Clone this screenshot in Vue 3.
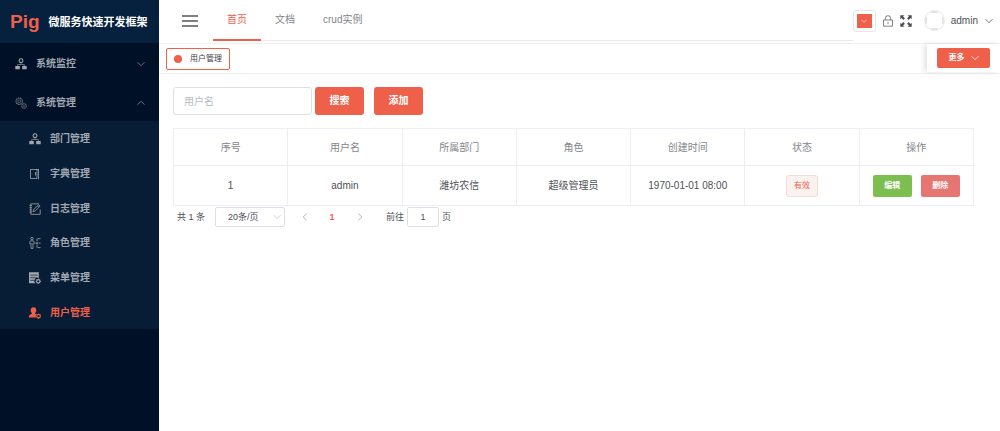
<script setup>
import { ref } from 'vue'

const topNav = ['首页', '文档', 'crud实例']
const groups = [
  { label: '系统监控', icon: 'org', open: false },
  { label: '系统管理', icon: 'gears', open: true }
]
const subItems = [
  { label: '部门管理', icon: 'org' },
  { label: '字典管理', icon: 'book' },
  { label: '日志管理', icon: 'log' },
  { label: '角色管理', icon: 'role' },
  { label: '菜单管理', icon: 'menu' },
  { label: '用户管理', icon: 'user', active: true }
]
const columns = ['序号', '用户名', '所属部门', '角色', '创建时间', '状态', '操作']
const rows = [
  { id: 1, name: 'admin', dept: '潍坊农信', role: '超级管理员', time: '1970-01-01 08:00', status: '有效' }
]
const keyword = ref('')
const pageSize = ref('20')
const jump = ref('1')
</script>

<template>
  <div class="app">
    <svg class="defs" aria-hidden="true">
      <symbol id="org" viewBox="0 0 12 12">
        <circle cx="6" cy="2.7" r="1.900" fill="none" stroke="currentColor" stroke-width="1.100" />
        <path d="M6 4.800v1.700M2.700 8V6.500h6.600V8" fill="none" stroke="currentColor" stroke-width=".6" />
        <path d="M.3 8h4.500v3.200H.3zM7.200 8h4.500v3.200H7.200z" fill="currentColor" />
      </symbol>
      <symbol id="gears" viewBox="0 0 12 12">
        <g fill="none" stroke="currentColor">
          <circle cx="4.200" cy="4.200" r="3.200" stroke-width="1.200" stroke-dasharray="1.700 .5" />
          <circle cx="4.200" cy="4.200" r="1.400" stroke-width=".8" />
          <circle cx="9" cy="8.900" r="2.300" stroke-width="1.100" stroke-dasharray="1.300 .5" />
          <circle cx="9" cy="8.900" r=".8" stroke-width=".6" />
        </g>
      </symbol>
      <symbol id="book" viewBox="0 0 12 12">
        <path d="M1.500 1.500h6.500v9H1.500zM9.500 1v10.300M8 1.500h1.500M6.500 4v3.500" fill="none" stroke="currentColor" stroke-width=".8" />
      </symbol>
      <symbol id="log" viewBox="0 0 12 12">
        <path d="M10 .8H1.800v10.500h9.400V6.500" fill="none" stroke="currentColor" stroke-width=".8" />
        <path d="M4 8.800l.6-2.300L9.700 1.700l1.400 1.300-5 5zM8.400 2.900l1.400 1.300" fill="none" stroke="currentColor" stroke-width=".8" />
        <path d="M.4 2.500h2.500M.4 4.700h2.500M.4 6.900h2.500M.4 9.100h2.500" stroke="currentColor" stroke-width=".8" />
      </symbol>
      <symbol id="role" viewBox="0 0 12 12">
        <g fill="none" stroke="currentColor" stroke-width=".8">
          <circle cx="3" cy="1.600" r="1.200" />
          <path d="M.9 7.200V5c0-.8.4-1.200 1.100-1.200h2c.7 0 1.100.4 1.100 1.200v2.200M2 6v5.400M4 6v5.400M2 11.400h2" />
          <path d="M11.600 1.700H8v8.900h3.600M6.400 6.200h5.200" stroke-dasharray="2.800 .5" />
        </g>
      </symbol>
      <symbol id="menu" viewBox="0 0 12 12">
        <path d="M0 .3h9.800v6a3 3 0 0 0-3.400 4.900H0z" fill="currentColor" />
        <path d="M1.200 3.100h7.500M1.200 5.700h7.500M1.200 8.300h4.500" stroke="#071d36" stroke-width=".7" />
        <circle cx="9.300" cy="9.300" r="1.700" fill="none" stroke="currentColor" stroke-width="1.100" />
        <path d="M9.300 6.700v1M9.300 11v1M6.700 9.300h1M11 9.300h1M7.500 7.500l.7.7M10.400 10.400l.7.7M11.100 7.500l-.7.7M8.200 10.400l-.7.7" stroke="currentColor" stroke-width=".9" />
      </symbol>
      <symbol id="user" viewBox="0 0 12 12">
        <path d="M4.500.3c1.800 0 2.800 1.300 2.800 2.900 0 1.300-.5 2.300-1.200 2.900v.6l1.500.6a3 3 0 0 0-.7 3.300H0c0-2.400.3-3 3-3.900v-.6C2.200 5.500 1.700 4.500 1.700 3.200 1.700 1.600 2.700.3 4.500.3z" fill="currentColor" />
        <circle cx="9.500" cy="9.200" r="1.700" fill="none" stroke="currentColor" stroke-width="1.100" />
        <path d="M9.500 6.500v1M9.500 10.900v1M6.900 9.200h.9M11.200 9.200h.8M7.600 7.300l.7.7M10.700 10.400l.7.7M11.400 7.300l-.7.7M8.300 10.400l-.7.7" stroke="currentColor" stroke-width=".9" />
      </symbol>
      <symbol id="down" viewBox="0 0 8 8">
        <path d="M.5 2.200L4 5.700l3.500-3.500" fill="none" stroke="currentColor" stroke-width=".8" />
      </symbol>
      <symbol id="up" viewBox="0 0 8 8">
        <path d="M.5 5.700L4 2.200l3.500 3.500" fill="none" stroke="currentColor" stroke-width=".8" />
      </symbol>
    </svg>

    <aside class="sidebar">
      <div class="logo"><b class="brand">Pig</b><span>微服务快速开发框架</span></div>
      <nav>
        <button v-for="g in groups" :key="g.label" type="button" class="group" :aria-expanded="g.open">
          <svg :class="['icon', { dim: g.open }]"><use :href="'#' + g.icon" /></svg>
          <span>{{ g.label }}</span>
          <svg class="chev"><use :href="g.open ? '#up' : '#down'" /></svg>
        </button>
        <div class="submenu">
          <a v-for="s in subItems" :key="s.label" href="#" :class="['sub', { active: s.active }]">
            <svg class="icon"><use :href="'#' + s.icon" /></svg>
            <span>{{ s.label }}</span>
          </a>
        </div>
      </nav>
    </aside>

    <div class="page">
      <header class="topbar">
        <button type="button" class="burger" aria-label="折叠菜单">
          <svg viewBox="0 0 16 12"><path d="M0 1h16M0 6h16M0 11h16" stroke="#55575c" stroke-width="1.500" /></svg>
        </button>
        <nav class="topnav">
          <a v-for="(n, i) in topNav" :key="n" href="#" :class="{ active: i === 0 }">{{ n }}</a>
        </nav>
        <div class="tools">
          <button type="button" class="picker" aria-label="主题颜色">
            <span class="swatch"><svg><use href="#down" /></svg></span>
          </button>
          <button type="button" class="tool" aria-label="锁屏">
            <svg viewBox="0 0 12 12" fill="none" stroke="#606266" stroke-width=".8">
              <path d="M1.500 5h9v6.200h-9zM3.300 5V3.200a2.700 2.500 0 0 1 5.400 0V5M6 7.200v1.900" />
            </svg>
          </button>
          <button type="button" class="tool" aria-label="全屏">
            <svg viewBox="0 0 12 12">
              <path d="M.3.3h4L3.100 1.500l1.800 1.800-1.600 1.600-1.800-1.800L.3 4.300zM11.700.3v4l-1.200-1.200-1.800 1.800-1.600-1.600 1.800-1.800L7.700.3zM.3 11.700v-4l1.200 1.200 1.800-1.800 1.600 1.600-1.800 1.800 1.200 1.200zM11.700 11.700h-4l1.200-1.200-1.800-1.800 1.600-1.600 1.800 1.800 1.200-1.200z" fill="#4c4e53" />
            </svg>
          </button>
          <span class="avatar">
            <svg viewBox="0 0 20 20" fill="none">
              <circle cx="10" cy="10" r="9.500" stroke="#ececee" />
              <path d="M7 2h6M7 18h6M2 7v6M18 7v6" stroke="#b8b8bb" stroke-width=".7" />
            </svg>
          </span>
          <button type="button" class="account">admin <svg><use href="#down" /></svg></button>
        </div>
      </header>

      <div class="tabs">
        <a href="#" class="tab"><i class="dot"></i>用户管理</a>
        <div class="more-box">
          <button type="button" class="more">更多 <svg><use href="#down" /></svg></button>
        </div>
      </div>

      <main class="content">
        <form class="search" @submit.prevent>
          <input v-model="keyword" type="text" placeholder="用户名" aria-label="用户名" />
          <button type="submit" class="btn">搜索</button>
          <button type="button" class="btn add">添加</button>
        </form>

        <table>
          <thead>
            <tr><th v-for="c in columns" :key="c" scope="col">{{ c }}</th></tr>
          </thead>
          <tbody>
            <tr v-for="r in rows" :key="r.id">
              <td>{{ r.id }}</td>
              <td>{{ r.name }}</td>
              <td>{{ r.dept }}</td>
              <td>{{ r.role }}</td>
              <td>{{ r.time }}</td>
              <td><span class="tag">{{ r.status }}</span></td>
              <td>
                <div class="ops">
                  <button type="button" class="op edit">编辑</button>
                  <button type="button" class="op del">删除</button>
                </div>
              </td>
            </tr>
          </tbody>
        </table>

        <div class="pager">
          <span class="total">共 1 条</span>
          <span class="size">
            <select v-model="pageSize" aria-label="每页条数">
              <option value="20">20条/页</option>
              <option value="50">50条/页</option>
            </select>
            <svg><use href="#down" /></svg>
          </span>
          <button type="button" class="arrow" aria-label="上一页">
            <svg viewBox="0 0 8 8"><path d="M5.600.7L2.200 4l3.400 3.300" fill="none" stroke="currentColor" /></svg>
          </button>
          <button type="button" class="num" aria-current="page">1</button>
          <button type="button" class="arrow" aria-label="下一页">
            <svg viewBox="0 0 8 8"><path d="M2.400.7L5.800 4 2.400 7.300" fill="none" stroke="currentColor" /></svg>
          </button>
          <label class="jump">前往<input v-model="jump" type="text" />页</label>
        </div>
      </main>
    </div>
  </div>
</template>

<style>
body {
  background: #fff;
}
</style>

<style scoped>
* {
  box-sizing: border-box;
}
.app {
  display: flex;
  min-height: 100vh;
  font-family: "Liberation Sans", "Noto Sans CJK SC", sans-serif;
  font-size: 10px;
  line-height: 16px;
  color: #4f5156;
}
.defs {
  position: absolute;
  width: 0;
  height: 0;
}
button,
input,
select {
  font: inherit;
  color: inherit;
  margin: 0;
  padding: 0;
  border: 0;
  background: none;
}
a {
  color: inherit;
  text-decoration: none;
}
svg {
  display: block;
  flex: none;
  width: 8px;
  height: 8px;
}

.sidebar {
  flex: none;
  width: 159px;
  background: #001127;
  color: #a2a8b2;
  font-weight: 700;
}
.logo {
  display: flex;
  align-items: center;
  gap: 9px;
  height: 43px;
  padding-left: 10px;
  background: #05213e;
  color: #fff;
  font-size: 11px;
  white-space: nowrap;
}
.brand {
  color: #ef604b;
  font-size: 19px;
}
.group {
  display: flex;
  align-items: center;
  gap: 9px;
  width: 100%;
  height: 39px;
  padding: 2px 14px 0 15px;
}
.icon {
  width: 12px;
  height: 12px;
  color: #a2a5ab;
}
.dim {
  color: #686f7b;
}
.chev {
  margin-left: auto;
  color: #7f8794;
}
.submenu {
  display: grid;
  grid-auto-rows: 1fr;
  height: 208px;
  background: #071d36;
}
.sub {
  display: flex;
  align-items: center;
  gap: 9px;
  padding: 2px 0 0 29px;
}
.active,
.active .icon {
  color: #ef604b;
}

.page {
  flex: 1;
  min-width: 0;
}
.topbar {
  display: flex;
  height: 44px;
  padding: 0 7px 0 23px;
  border-bottom: 1px solid #f0f0f1;
}
.burger {
  width: 16px;
  height: 41px;
  margin-right: 15px;
}
.burger svg {
  width: 16px;
  height: 12px;
}
.topnav {
  flex: 1;
  display: flex;
  height: 41px;
  border-bottom: 1px solid #e9eaed;
  color: #83868c;
}
.topnav a {
  height: 41px;
  padding: 0 14px;
  line-height: 40px;
}
.topnav .active {
  border-bottom: 2px solid #ef604b;
}
.tools {
  display: flex;
  align-items: center;
  height: 41px;
}
.picker {
  width: 23px;
  height: 22px;
  padding: 3px;
  border: 1px solid #e6e6e8;
  border-radius: 3px;
}
.swatch {
  display: grid;
  place-items: center;
  height: 100%;
  background: #ef604b;
  color: #fff;
}
.swatch svg {
  width: 6px;
  height: 6px;
}
.tool {
  margin-left: 6px;
}
.tool svg {
  width: 12px;
  height: 12px;
}
.avatar {
  margin: 0 6px 0 12px;
}
.avatar svg {
  width: 21px;
  height: 21px;
}
.account {
  display: flex;
  align-items: center;
  gap: 7px;
}

.tabs {
  display: flex;
  align-items: center;
  justify-content: space-between;
  height: 30px;
  padding-left: 7px;
  border-bottom: 1px solid #f0f0f1;
}
.tab {
  display: flex;
  align-items: center;
  gap: 8px;
  height: 22px;
  padding: 0 7px;
  border: 1px solid #ef604b;
  border-radius: 2px;
  font-size: 8px;
  color: #3f4147;
}
.dot {
  width: 8px;
  height: 8px;
  border-radius: 50%;
  background: #ef604b;
}
.more-box {
  align-self: flex-start;
  padding: 4px 10px;
  background: #fff;
  box-shadow: -3px 0 5px rgba(0, 0, 0, 0.1);
}
.more {
  display: flex;
  align-items: center;
  justify-content: center;
  gap: 6px;
  width: 53px;
  height: 20px;
  border-radius: 2px;
  background: #ef604b;
  color: #fff;
  font-size: 8px;
  font-weight: 700;
}

.content {
  padding: 13px 26px 13px 14px;
}
.search {
  display: flex;
  margin-bottom: 13px;
}
.search input {
  width: 139px;
  height: 28px;
  padding: 0 10px;
  border: 1px solid #dcdfe6;
  border-radius: 3px;
}
.search input::placeholder {
  color: #b6bac3;
}
.btn {
  width: 49px;
  height: 28px;
  margin-left: 3px;
  border-radius: 3px;
  background: #ef604b;
  color: #fff;
  font-weight: 700;
}
.add {
  margin-left: 10px;
}
table {
  width: 100%;
  table-layout: fixed;
  border-collapse: collapse;
  text-align: center;
}
th,
td {
  padding: 0;
  border: 1px solid #ebeef5;
}
th {
  height: 37px;
  padding-top: 2px;
  color: #83868c;
  font-weight: 400;
}
td {
  height: 40px;
}
.tag {
  display: inline-block;
  height: 22px;
  padding: 0 7px;
  border: 1px solid #f7dcd5;
  border-radius: 3px;
  background: #f9f2ee;
  color: #ef604b;
  font-size: 8px;
  line-height: 20px;
  vertical-align: middle;
}
.ops {
  display: flex;
  justify-content: center;
  gap: 9px;
}
.op {
  width: 39px;
  height: 22px;
  border-radius: 2px;
  color: #fff;
  font-size: 8px;
  font-weight: 700;
}
.edit {
  background: #7dbe50;
}
.del {
  background: #e67672;
}

.pager {
  display: flex;
  align-items: center;
  margin-top: 1px;
  padding-left: 4px;
  font-size: 9px;
}
.size {
  display: grid;
  align-items: center;
  margin-left: 10px;
}
.size select,
.size svg {
  grid-area: 1 / 1;
}
.size select {
  appearance: none;
  width: 70px;
  height: 20px;
  padding-left: 12px;
  border: 1px solid #dcdfe6;
  border-radius: 2px;
}
.size svg {
  justify-self: end;
  margin-right: 4px;
  color: #c0c4cc;
  pointer-events: none;
}
.arrow {
  margin-left: 16px;
  color: #b0b3ba;
}
.num {
  width: 16px;
  margin-left: 15px;
  color: #ef604b;
  font-weight: 700;
}
.jump {
  display: flex;
  align-items: center;
  gap: 3px;
  margin-left: 22px;
}
.jump input {
  width: 32px;
  height: 20px;
  border: 1px solid #dcdfe6;
  border-radius: 2px;
  text-align: center;
}
</style>
